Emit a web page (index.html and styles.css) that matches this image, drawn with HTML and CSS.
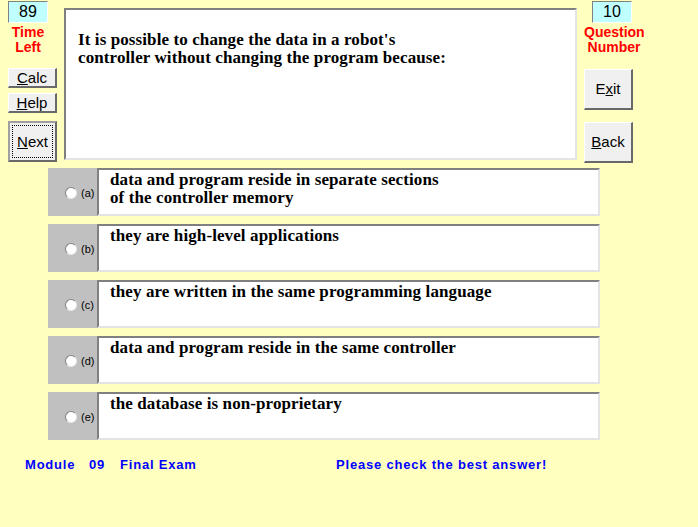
FILE: index.html
```html
<!DOCTYPE html>
<html lang="en">
<head>
    <meta charset="UTF-8">
    <title>Final Exam</title>
    <link rel="stylesheet" href="styles.css">
</head>
<body>
    <div class="top">
        <div class="side side-left">
            <div class="counter">89</div>
            <div class="caption">Time<br>Left</div>
            <button class="btn small first"><u>C</u>alc</button>
            <button class="btn small"><u>H</u>elp</button>
            <button class="btn big focus"><span class="focus-ring"><u>N</u>ext</span></button>
        </div>
        <div class="question">
            It is possible to change the data in a robot's<br>
            controller without changing the program because:
        </div>
        <div class="side side-right">
            <div class="counter">10</div>
            <div class="caption">Question<br>Number</div>
            <button class="btn big first">E<u>x</u>it</button>
            <button class="btn big"><u>B</u>ack</button>
        </div>
    </div>

    <ul class="answers">
        <li>
            <label class="pick"><span class="radio"></span>(a)</label>
            <div class="answer">data and program reside in separate sections<br>of the controller memory</div>
        </li>
        <li>
            <label class="pick"><span class="radio"></span>(b)</label>
            <div class="answer">they are high-level applications</div>
        </li>
        <li>
            <label class="pick"><span class="radio"></span>(c)</label>
            <div class="answer">they are written in the same programming language</div>
        </li>
        <li>
            <label class="pick"><span class="radio"></span>(d)</label>
            <div class="answer">data and program reside in the same controller</div>
        </li>
        <li>
            <label class="pick"><span class="radio"></span>(e)</label>
            <div class="answer">the database is non-proprietary</div>
        </li>
    </ul>

    <div class="footer">
        <span class="module">Module</span>
        <span class="number">09</span>
        <span class="exam">Final Exam</span>
        <span class="hint">Please check the best answer!</span>
    </div>
</body>
</html>
```

FILE: styles.css
```css
*{
    margin: 0;
    padding: 0;
    box-sizing: border-box;
}
body{
    background: #ffffc0;
    font-family: "Liberation Sans", Arial, sans-serif;
    width: 698px;
    height: 527px;
    overflow: hidden;
}
li{
    list-style: none;
}

.top{
    display: flex;
    align-items: flex-start;
    padding-top: 1px;
}
.side{
    display: flex;
    flex-direction: column;
    align-items: flex-start;
    width: 49px;
}
.side-left{
    margin-left: 8px;
}
.side-right{
    margin-left: 7px;
}
.counter{
    width: 40px;
    height: 22px;
    background: #c0ffff;
    border-top: 1px solid #808080;
    border-left: 1px solid #808080;
    border-right: 1px solid #ffffff;
    border-bottom: 1px solid #ffffff;
    font-size: 16px;
    line-height: 20px;
    text-align: center;
    color: #000;
}
.side-right .counter{
    margin-left: 8px;
}
.caption{
    width: 40px;
    margin-top: 2px;
    color: #ff0000;
    font-weight: bold;
    font-size: 14px;
    line-height: 15px;
    text-align: center;
}
.side-right .caption{
    width: 60px;
}

.btn{
    width: 49px;
    background: #f0f0f0;
    border-top: 1px solid #ffffff;
    border-left: 1px solid #ffffff;
    border-right: 2px solid #696969;
    border-bottom: 2px solid #696969;
    font-family: "Liberation Sans", Arial, sans-serif;
    font-size: 15px;
    color: #000;
    cursor: pointer;
}
.btn.small{
    height: 20px;
    line-height: 16px;
    margin-top: 5px;
}
.btn.small.first{
    margin-top: 13px;
}
.btn.big{
    height: 41px;
    margin-top: 12px;
    padding-bottom: 2px;
}
.side-right .btn.big.first{
    margin-top: 14px;
}
.btn.focus{
    margin-top: 8px;
    border: 2px solid #696969;
    border-top-color: #a0a0a0;
    border-left-color: #a0a0a0;
    padding: 2px;
}
.focus-ring{
    display: block;
    height: 100%;
    border: 1px dotted #000;
    line-height: 31px;
}

.question{
    width: 513px;
    height: 152px;
    margin-left: 7px;
    margin-top: 7px;
    background: #fff;
    border-top: 2px solid #808080;
    border-left: 2px solid #808080;
    border-right: 2px solid #e4e4e4;
    border-bottom: 2px solid #e4e4e4;
    padding: 21px 12px 0 12px;
    font-family: "Liberation Serif", "Times New Roman", serif;
    font-weight: bold;
    font-size: 17px;
    line-height: 18px;
    letter-spacing: 0.1px;
    color: #000;
}

.answers{
    margin: 5px 0 0 48px;
    width: 552px;
    display: flex;
    flex-direction: column;
    gap: 8px;
}
.answers li{
    display: flex;
    height: 48px;
}
.pick{
    width: 49px;
    background: #c0c0c0;
    display: flex;
    align-items: center;
    padding-left: 17px;
    padding-top: 2px;
    font-size: 11px;
    color: #000;
}
.radio{
    width: 12px;
    height: 12px;
    border-radius: 50%;
    background: #fff;
    border: 1px solid #808080;
    border-right-color: #e8e8e8;
    border-bottom-color: #e8e8e8;
    margin-right: 4px;
}
.answer{
    flex: 1;
    background: #fff;
    border-top: 2px solid #808080;
    border-left: 2px solid #808080;
    border-right: 2px solid #e4e4e4;
    border-bottom: 2px solid #e4e4e4;
    padding: 1px 11px 0 11px;
    font-family: "Liberation Serif", "Times New Roman", serif;
    font-weight: bold;
    font-size: 17px;
    line-height: 18px;
    letter-spacing: 0.1px;
    color: #000;
}

.footer{
    display: flex;
    margin-top: 17px;
    padding-left: 25px;
    color: #0000ff;
    font-weight: bold;
    font-size: 13px;
    line-height: 16px;
    letter-spacing: 0.8px;
}
.footer span{
    flex: none;
}
.module{
    width: 64px;
}
.number{
    width: 31px;
}
.exam{
    width: 216px;
}
```
